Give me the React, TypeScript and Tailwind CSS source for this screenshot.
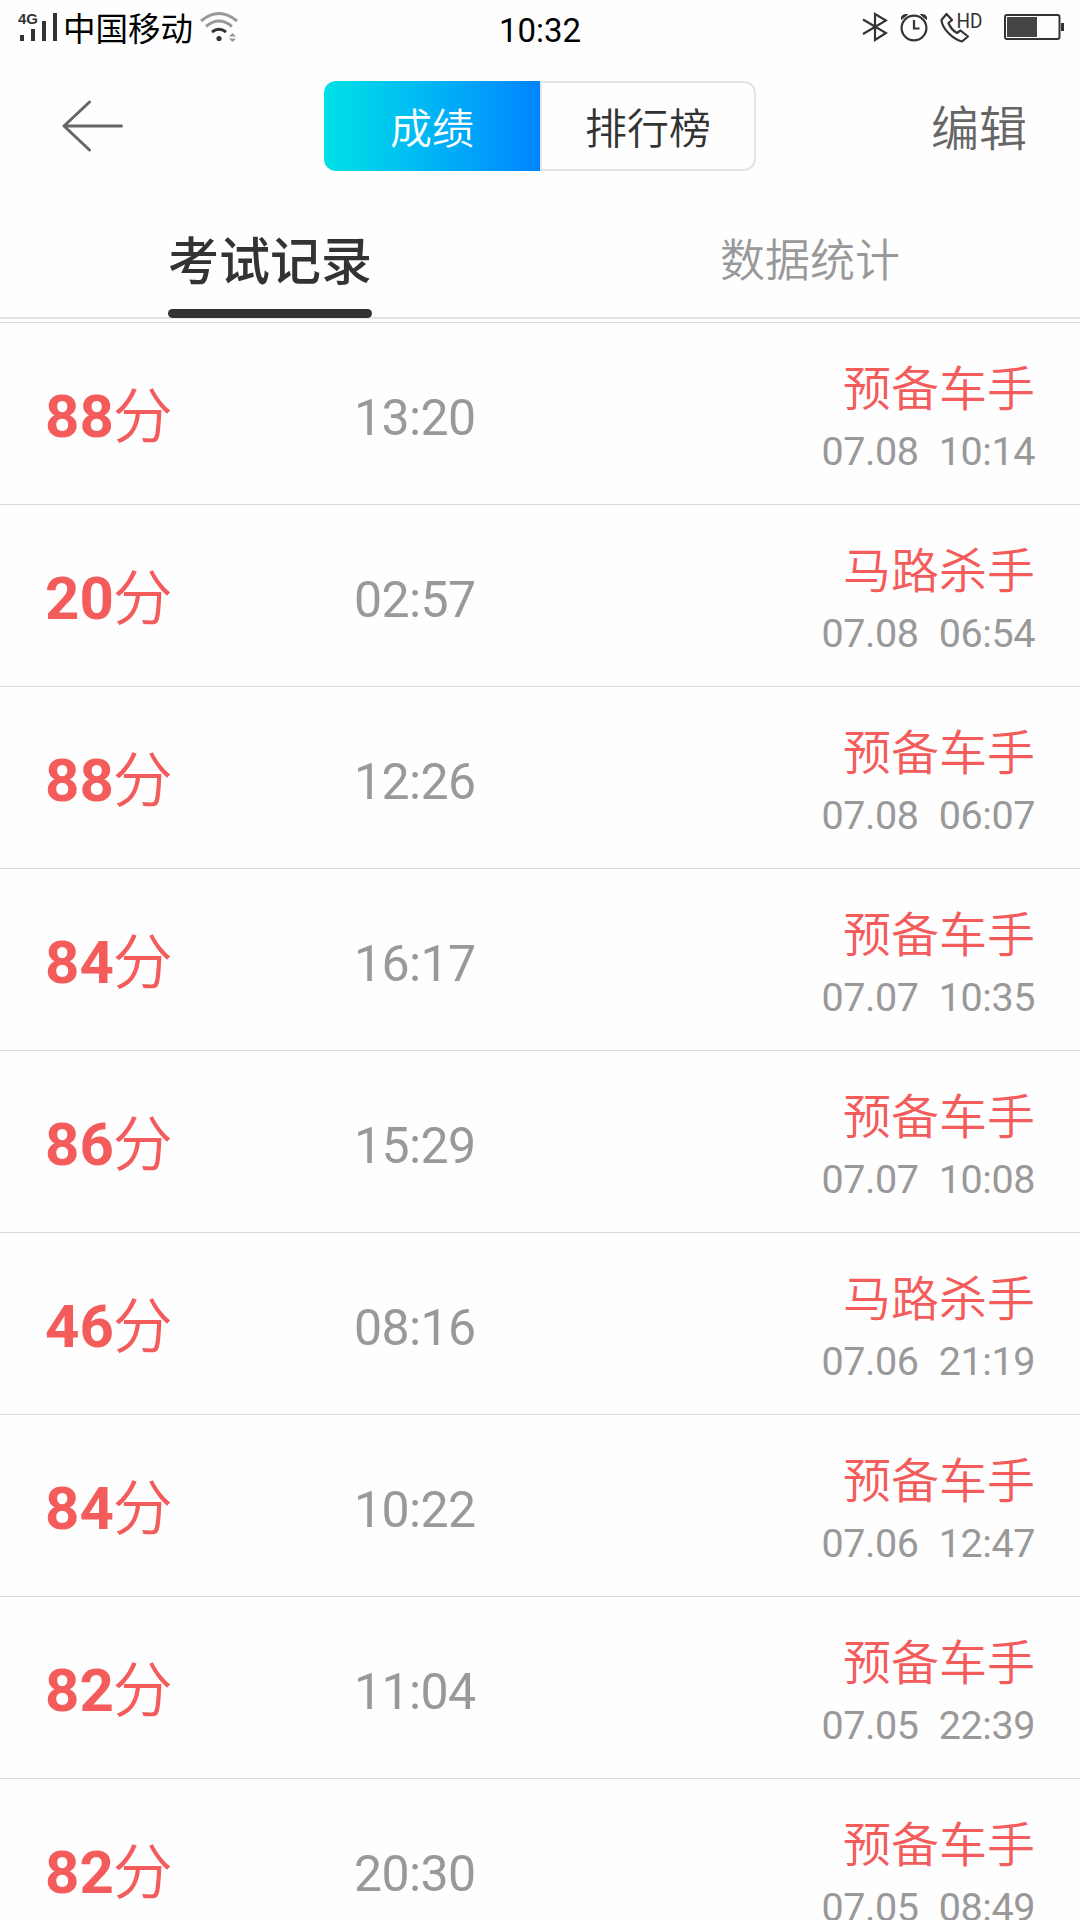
const records = [
  { score: 88, duration: "13:20", title: "预备车手", date: "07.08", time: "10:14" },
  { score: 20, duration: "02:57", title: "马路杀手", date: "07.08", time: "06:54" },
  { score: 88, duration: "12:26", title: "预备车手", date: "07.08", time: "06:07" },
  { score: 84, duration: "16:17", title: "预备车手", date: "07.07", time: "10:35" },
  { score: 86, duration: "15:29", title: "预备车手", date: "07.07", time: "10:08" },
  { score: 46, duration: "08:16", title: "马路杀手", date: "07.06", time: "21:19" },
  { score: 84, duration: "10:22", title: "预备车手", date: "07.06", time: "12:47" },
  { score: 82, duration: "11:04", title: "预备车手", date: "07.05", time: "22:39" },
  { score: 82, duration: "20:30", title: "预备车手", date: "07.05", time: "08:49" },
];

const SignalIcon = () => (
  <svg width="42" height="56" viewBox="0 0 42 56" fill="#333">
    <text x="0" y="24" fontSize="15.5" fontWeight="700" fontFamily="Liberation Sans, sans-serif" textLength="20" lengthAdjust="spacingAndGlyphs">
      4G
    </text>
    <rect x="2" y="35" width="4" height="6" />
    <rect x="13" y="29" width="4" height="12" />
    <rect x="24" y="21" width="4" height="20" />
    <rect x="35" y="13" width="4" height="28" />
  </svg>
);

const WifiIcon = () => (
  <svg width="40" height="56" viewBox="0 0 40 56" fill="none" strokeWidth="3">
    <path d="M1 21Q19 6 37 21" stroke="#999" />
    <path d="M6 26.5Q19 15.5 32 26.5" stroke="#999" />
    <path d="M12 32Q19 26.5 26 32" stroke="#333" />
    <circle cx="19" cy="38.5" r="2.6" fill="#333" />
    <path d="M29 36.5L32.5 33L36 36.5ZM29 38.5L32.5 42L36 38.5Z" fill="#999" />
  </svg>
);

const BluetoothIcon = () => (
  <svg width="26" height="56" viewBox="0 0 26 56" fill="none" stroke="#333" strokeWidth="2.2">
    <path d="M1 19.5L24 33L13 40V14L24 20.5L1 34" />
  </svg>
);

const AlarmIcon = () => (
  <svg width="30" height="56" viewBox="0 0 30 56" fill="none" stroke="#333" strokeWidth="2.2">
    <circle cx="15" cy="28" r="12.4" />
    <path d="M15 20V28.5H20.5" />
    <path d="M2.5 19.5Q1.5 14 8.5 14.5ZM27.5 19.5Q28.5 14 21.5 14.5Z" fill="#333" strokeWidth="1" />
  </svg>
);

const CallHdIcon = () => (
  <svg width="44" height="56" viewBox="0 0 44 56" fill="none" stroke="#333" strokeWidth="2.2" strokeLinejoin="round">
    <path d="M6.5 14L1.5 20C2 28 12 39 22 41.5L28 36.5L20.5 30.5L17 33C13.5 31 10 27 8.5 23L12 20Z" />
    <text x="16.5" y="27.5" fontSize="20.5" fill="#333" stroke="none" fontFamily="Roboto, sans-serif" textLength="26" lengthAdjust="spacingAndGlyphs">
      HD
    </text>
  </svg>
);

const BatteryIcon = () => (
  <svg width="62" height="56" viewBox="0 0 62 56">
    <rect x="1" y="15" width="54.5" height="24" rx="2" fill="none" stroke="#333" strokeWidth="2" />
    <rect x="3" y="17" width="30" height="20" fill="#444" />
    <rect x="57" y="23" width="3" height="8" fill="#333" />
  </svg>
);

const StatusBar = () => (
  <div className="grid h-14 shrink-0 grid-cols-3 text-black">
    <div className="flex items-center pl-[18px]">
      <SignalIcon />
      <span className="ml-[3px] pt-1 text-[32.5px]">中国移动</span>
      <span className="ml-[7px]">
        <WifiIcon />
      </span>
    </div>
    <div className="flex items-center justify-center pt-[5px] text-[33px]">10:32</div>
    <div className="flex items-center justify-end pr-3.5">
      <BluetoothIcon />
      <span className="ml-[11px]">
        <AlarmIcon />
      </span>
      <span className="ml-[11px]">
        <CallHdIcon />
      </span>
      <span className="ml-5">
        <BatteryIcon />
      </span>
    </div>
  </div>
);

const NavBar = () => (
  <div className="flex h-[140px] shrink-0 items-start justify-between pt-[25px] pr-[53px] pl-[62px] font-[350]">
    <button className="flex h-[90px] w-[200px] items-center">
      <svg width="62" height="54" viewBox="0 0 62 54" fill="none" stroke="#666" strokeWidth="3" strokeLinecap="round" strokeLinejoin="round">
        <path d="M59.5 27H2M27.5 3L2 27L27.5 51" />
      </svg>
    </button>
    <div className="flex h-[90px] w-[432px] text-[42px]">
      <button className="flex w-[216px] items-center justify-center rounded-l-xl bg-linear-to-r from-[#00e1e5] to-[#0083ff] pt-1.5 text-white">
        成绩
      </button>
      <button className="flex w-[216px] items-center justify-center rounded-r-xl border-2 border-[#e4e4e4] pt-1.5 text-[#333]">
        排行榜
      </button>
    </div>
    <button className="flex h-[90px] w-[209px] items-center justify-end pt-2 text-5xl text-[#666]">编辑</button>
  </div>
);

const Tabs = () => (
  <div className="flex h-[123px] shrink-0 border-b-2 border-[#e6e6e6]">
    <div className="flex flex-1 flex-col items-center justify-between">
      <span className="flex h-[112px] items-center pt-[22px] text-[51px] font-medium text-[#333]">考试记录</span>
      <div className="-mb-px h-[9px] w-[204px] shrink-0 rounded-full bg-[#333]" />
    </div>
    <div className="flex h-[112px] flex-1 items-center justify-center pt-[19px] text-[45px] font-[350] text-[#999]">数据统计</div>
  </div>
);

const RecordRow = ({ record }: { record: (typeof records)[number] }) => (
  <div className="flex h-[182px] shrink-0 items-center border-b border-[#d9d9d9] px-[45px]">
    <div className="flex w-[309px] pt-[7px] text-[60px] leading-none text-[#f45b5b]">
      <span className="font-bold">{record.score}</span>
      <span className="-ml-px pt-px font-[350]">分</span>
    </div>
    <div className="flex-1 pt-[9px] text-[50px] tracking-[-0.6px] text-[#999]">{record.duration}</div>
    <div className="flex flex-col items-end pt-2">
      <span className="text-5xl leading-[68px] font-[350] text-[#f45b5b]">{record.title}</span>
      <span className="flex gap-5 text-[39.5px] leading-[56px] tracking-[-0.4px] text-[#999]">
        <span>{record.date}</span>
        <span>{record.time}</span>
      </span>
    </div>
  </div>
);

export default function App() {
  return (
    <div className="flex h-[1920px] w-[1080px] flex-col overflow-hidden bg-[#fefefe] font-[Roboto,'Noto_Sans_CJK_SC',sans-serif]">
      <StatusBar />
      <NavBar />
      <Tabs />
      <div className="mt-[3px] border-t border-[#d9d9d9]">
        {records.map((record, i) => (
          <RecordRow key={i} record={record} />
        ))}
      </div>
    </div>
  );
}
